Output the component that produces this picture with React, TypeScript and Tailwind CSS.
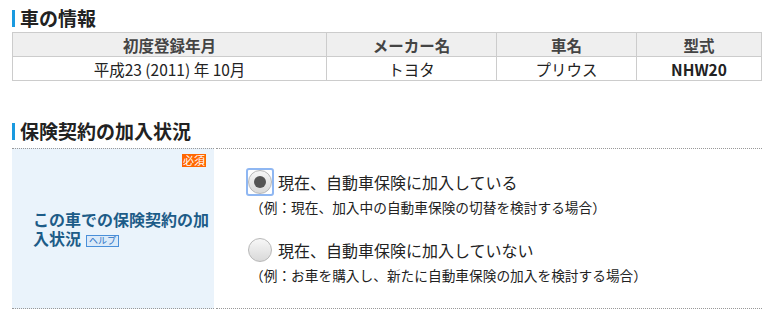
import React from "react";

const font = { fontFamily: '"Noto Sans CJK JP", "Noto Sans", sans-serif' };

interface RadioProps {
  checked?: boolean;
  focused?: boolean;
  label: string;
  note: string;
}

function Radio({ checked, focused, label, note }: RadioProps) {
  return (
    <div className="flex flex-col">
      <div className="flex items-center">
        <span
          className={
            focused
              ? "flex h-[28px] w-[28px] items-center justify-center rounded-[3px] border-2 border-[#8fb7f2]"
              : "flex h-[28px] w-[28px] items-center justify-center"
          }
        >
          <span className="flex h-[24px] w-[24px] items-center justify-center rounded-full border border-[#b8b8b8] bg-gradient-to-b from-[#f7f7f7] to-[#d9d9d9]">
            {checked && <span className="h-[12px] w-[12px] rounded-full bg-[#555]" />}
          </span>
        </span>
        <span className="ml-[4px] text-[16px] leading-[20px] text-[#222]">{label}</span>
      </div>
      <p className="ml-[4px] mt-[1px] text-[13.7px] leading-[20px] text-[#222]">{note}</p>
    </div>
  );
}

export default function App() {
  return (
    <div className="h-[316px] w-[772px] bg-white px-[12px] pt-[6px] text-[#333]" style={font}>
      <h2 className="flex items-center text-[19px] font-bold leading-[24px] text-[#222]">
        <span className="mr-[5px] h-[17px] w-[3px] bg-[#1a9ae0]" />
        車の情報
      </h2>
      <table className="mt-[2px] w-[750px] border-collapse text-[15.5px]">
        <thead>
          <tr className="bg-[#efefef]">
            <th className="h-[24px] w-[314px] border border-[#cccccc] p-0 font-bold leading-[20px] text-[#444]">初度登録年月</th>
            <th className="w-[170px] border border-[#cccccc] p-0 font-bold leading-[20px] text-[#444]">メーカー名</th>
            <th className="w-[140px] border border-[#cccccc] p-0 font-bold leading-[20px] text-[#444]">車名</th>
            <th className="border border-[#cccccc] p-0 font-bold leading-[20px] text-[#444]">型式</th>
          </tr>
        </thead>
        <tbody>
          <tr>
            <td className="h-[24px] border border-[#cccccc] p-0 text-center leading-[20px] text-[#222]">平成23 (2011) 年 10月</td>
            <td className="border border-[#cccccc] p-0 text-center leading-[20px] text-[#222]">トヨタ</td>
            <td className="border border-[#cccccc] p-0 text-center leading-[20px] text-[#222]">プリウス</td>
            <td className="border border-[#cccccc] p-0 text-center font-semibold leading-[20px] text-[#222]">NHW20</td>
          </tr>
        </tbody>
      </table>

      <h2 className="mt-[38px] flex items-center text-[19px] font-bold leading-[24px] text-[#222]">
        <span className="mr-[5px] h-[17px] w-[3px] bg-[#1a9ae0]" />
        保険契約の加入状況
      </h2>
      <div className="mt-[5px] flex w-[750px] gap-[2px]">
        <div className="relative flex h-[161px] w-[202px] items-center border-y border-dotted border-[#999] bg-[#eaf3fb] pl-[21px] pr-[2px]">
          <span className="absolute right-[8px] top-[5px] bg-[#ff6600] px-[1px] text-[11px] leading-[13px] text-white">必須</span>
          <p className="text-[16px] font-bold leading-[19px] text-[#1d5c88]">
            この車での保険契約の加入状況
            <span className="ml-[5px] inline-block h-[12px] border border-[#4a8fd9] bg-[#dbeaf9] px-[2px] align-[1px] text-[9px] font-normal leading-[10px] text-[#2a6fc2]">
              ヘルプ
            </span>
          </p>
        </div>
        <div className="flex flex-1 flex-col justify-center gap-[19px] border-y border-dotted border-[#999] pb-[4px] pl-[30px]">
          <Radio checked focused label="現在、自動車保険に加入している" note="（例：現在、加入中の自動車保険の切替を検討する場合）" />
          <Radio label="現在、自動車保険に加入していない" note="（例：お車を購入し、新たに自動車保険の加入を検討する場合）" />
        </div>
      </div>
    </div>
  );
}
